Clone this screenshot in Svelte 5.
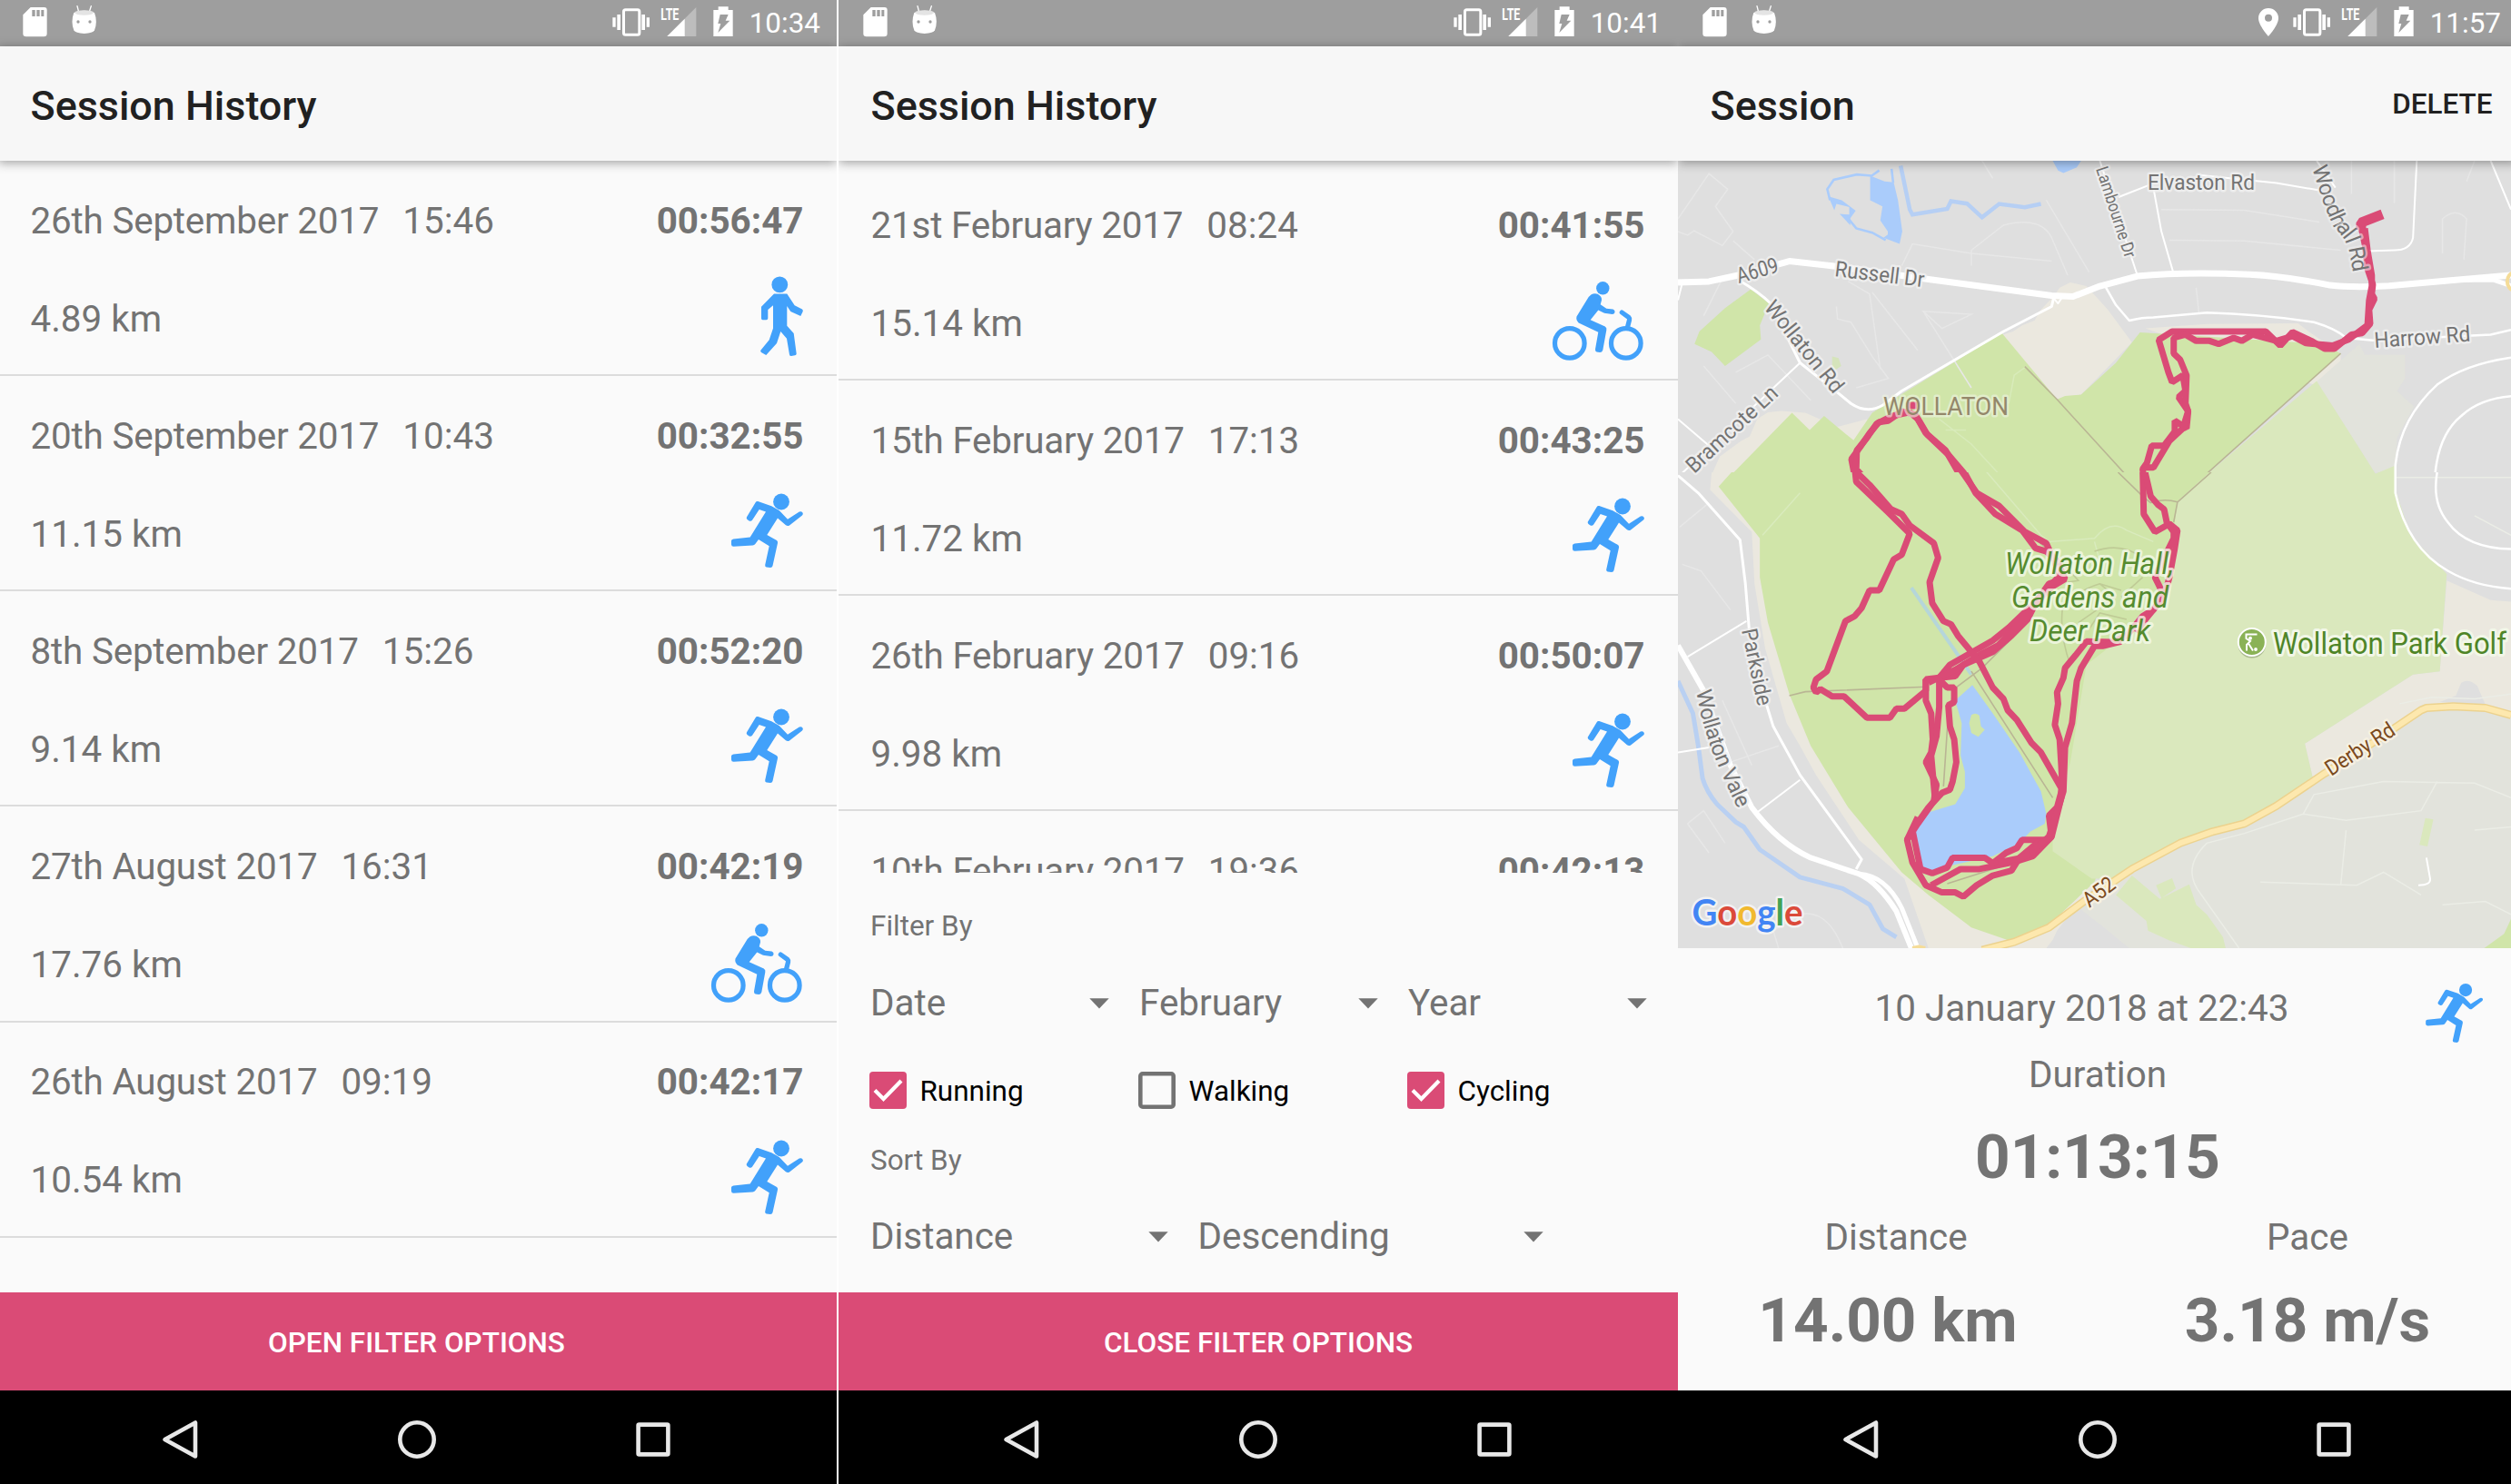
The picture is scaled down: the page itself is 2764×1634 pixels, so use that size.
<script>
  const septemberList = [
    { date: '26th September 2017', time: '15:46', duration: '00:56:47', distance: '4.89 km', kind: 'walk' },
    { date: '20th September 2017', time: '10:43', duration: '00:32:55', distance: '11.15 km', kind: 'run' },
    { date: '8th September 2017', time: '15:26', duration: '00:52:20', distance: '9.14 km', kind: 'run' },
    { date: '27th August 2017', time: '16:31', duration: '00:42:19', distance: '17.76 km', kind: 'cycle' },
    { date: '26th August 2017', time: '09:19', duration: '00:42:17', distance: '10.54 km', kind: 'run' }
  ];

  const februaryList = [
    { date: '21st February 2017', time: '08:24', duration: '00:41:55', distance: '15.14 km', kind: 'cycle' },
    { date: '15th February 2017', time: '17:13', duration: '00:43:25', distance: '11.72 km', kind: 'run' },
    { date: '26th February 2017', time: '09:16', duration: '00:50:07', distance: '9.98 km', kind: 'run' },
    { date: '10th February 2017', time: '19:36', duration: '00:42:13', distance: '9.60 km', kind: 'run' }
  ];

  const activities = [
    { label: 'Running', checked: true },
    { label: 'Walking', checked: false },
    { label: 'Cycling', checked: true }
  ];

  // Straight map labels: x, y of the baseline start, rotation and drawn length
  const streets = [
    { t: 'A609', x: 1914, y: 312, a: -16, l: 47 },
    { t: 'Russell Dr', x: 2019, y: 304, a: 7, l: 99 },
    { t: 'Elvaston Rd', x: 2364, y: 209, a: 0, l: 118 },
    { t: 'Wollaton Rd', x: 1941, y: 339, a: 51, l: 123 },
    { t: 'Bramcote Ln', x: 1865, y: 522, a: -43, l: 128 },
    { t: 'Harrow Rd', x: 2614, y: 383, a: -4, l: 106 },
    { t: 'Parkside', x: 1917, y: 694, a: 78, l: 86 },
    { t: 'Lambourne Dr', x: 2307, y: 186, a: 72, l: 104, c: 'small' },
    { t: 'Derby Rd', x: 2566, y: 855, a: -33, l: 86, c: 'trunk' },
    { t: 'A52', x: 2300, y: 1000, a: -37, l: 38, c: 'trunk' }
  ];
</script>

{#snippet activityIcon(kind)}
  <svg class="activity" viewBox="0 0 104 90">
    {#if kind === 'walk'}
      <ellipse cx="77.3" cy="10.4" rx="8.9" ry="8.9" />
      <path d="M71 20.6H85.3L93.7 33.2L102 37.4Q103.4 38.6 102.6 40.2L100.3 45L89.3 39.9L85.3 34V55.8L92.7 63.9L95.7 86.6Q95.6 88 94 88.3L90 89Q88.200 89 88 87.500L85 69.800L78.300 62L74 75L62.300 88L57 85Q55.500 83.800 56.500 82.500L65.700 71.300L70 58.400V33.200L64.300 38V47.500Q64.200 49.200 62.500 49.300H58.500Q57 49 57 47.500V34.700Z" />
    {:else if kind === 'run'}
      <circle cx="79" cy="12.5" r="8.9" />
      <path d="M53.300 12.100L68.300 17.200L76.700 22L86 31.700L98.800 23.600Q101 22.600 102.500 24.400Q103.500 26 102 27.600L88 38.400Q86 39.800 84 38.300L75 30.600L63.300 49.100L74 55Q75.400 56 75 58L69.500 83Q69 84.800 67 85L62.700 84.600Q60.900 84 61.200 82L65.700 61.300L54 53.900L50.300 59Q49.300 60.200 47.500 60.400L26.500 61.800Q24 61.700 24 59.500V55.500Q24.100 53.700 26.300 53.400L44.700 51.600L62 23.500L54.700 20.900L47 32.800Q45.600 34.400 43.600 33.400L41.500 32Q40.200 30.700 41 29.200L50.500 13.400Q51.500 11.700 53.300 12.100Z" />
    {:else}
      <circle cx="57.300" cy="9.300" r="7.200" />
      <circle class="ring" cx="20.800" cy="69.900" r="16.300" />
      <circle class="ring" cx="82.800" cy="69.900" r="16.300" />
      <path class="bar" d="M78.300 36L86 41.600Q87 42.600 86.600 44L84.300 53" />
      <path d="M44.300 16.500Q48 14.500 51.700 15.800Q56.500 18.500 56 22.400L54.700 27.200L61.300 31.800L68.500 32.600Q70.800 33.500 70.600 35.700Q70 37.900 67.700 38L59 36.800L52.300 33.500L43.700 44.300L59.800 51.500Q62 53 61.300 55.500L57.300 77.400Q56.500 79.900 54 80L50.600 79.500Q48.700 78.800 49 76.500L52.300 57.700L30.700 47.500Q27.500 44.500 28.500 40.600L41.700 18.900Z" />
    {/if}
  </svg>
{/snippet}

{#snippet statusBar(time, located)}
  <div class="status">
    <svg class="notices" viewBox="0 0 390 153">
      <path d="M73 49L98 24H143Q152 24 152 33V111Q152 121 142 121H83Q73 121 73 111Z" fill="#fff" />
      <path d="M103 33h10v21h-10zM118 33h10v21h-10zM133 33h9v21h-9z" fill="#9e9e9e" />
      <path d="M252 20L256 36M298 20L293 36" stroke="#fff" stroke-width="4" stroke-linecap="round" />
      <path d="M241 42Q275 28 309 42Q320 72 309 100Q304 110 275 111Q246 110 241 100Q230 72 241 42Z" fill="#fff" />
      <ellipse cx="275" cy="42" rx="31" ry="8" fill="#e4e4e4" />
      <circle cx="255" cy="72" r="5" fill="#9e9e9e" /><circle cx="294" cy="72" r="5" fill="#9e9e9e" />
    </svg>
    <div class="spacer"></div>
    {#if located}
      <svg class="pin" viewBox="0 0 22 31">
        <path fill-rule="evenodd" d="M11 0A11 11 0 0 0 0 11C0 19 11 31 11 31S22 19 22 11A11 11 0 0 0 11 0ZM11 6.800A4 4 0 1 1 11 14.800A4 4 0 0 1 11 6.800Z" fill="#fff" />
      </svg>
    {/if}
    <svg class="signals" viewBox="0 0 450 153">
      <path d="M43 58h10v31h-10zM58 48h11v51h-11zM139 48h11v51h-11zM155 58h10v31h-10z" fill="#fff" />
      <rect x="79.500" y="32" width="52" height="83" rx="6" fill="none" stroke="#fff" stroke-width="9" />
      <text x="202" y="67" font-size="56" textLength="60" lengthAdjust="spacingAndGlyphs">LTE</text>
      <path d="M319 24V120H223Z" fill="#bdbdbd" />
      <path d="M281 62V120H223Z" fill="#fff" />
      <path d="M376 33H392V22H425V33H440V120H376Z" fill="#fff" />
      <path d="M398 48H425L416 68H430L391 108L400 78H391Z" fill="#9e9e9e" />
    </svg>
    <span class="clock">{time}</span>
  </div>
{/snippet}

{#snippet appBar(title, action)}
  <header class="appbar">
    <h1>{title}</h1>
    {#if action}<button class="action">{action}</button>{/if}
  </header>
{/snippet}

{#snippet navBar()}
  <nav class="nav">
    <svg viewBox="0 0 44 44"><path d="M38 3.500V40.500L4.500 22Z" /></svg>
    <svg viewBox="0 0 44 44"><circle cx="22" cy="22" r="18.700" /></svg>
    <svg viewBox="0 0 44 44"><rect x="5.600" y="5.600" width="32.800" height="32.800" rx="1" /></svg>
  </nav>
{/snippet}

{#snippet sessionRow(s)}
  <li class="row">
    <div class="line">
      <span class="when">{s.date}</span><span class="at">{s.time}</span>
      <strong>{s.duration}</strong>
    </div>
    <div class="line second">
      <span>{s.distance}</span>
      {@render activityIcon(s.kind)}
    </div>
  </li>
{/snippet}

{#snippet dropdown(label)}
  <div class="dropdown">
    <span>{label}</span>
    <svg class="caret" viewBox="0 0 22 12"><path d="M0.300 0.300H21.700L11 11.500Z" /></svg>
  </div>
{/snippet}

<main class="stage">
  <section class="phone first">
    {@render statusBar('10:34', false)}
    {@render appBar('Session History')}
    <ul class="list">
      {#each septemberList as s}{@render sessionRow(s)}{/each}
    </ul>
    <button class="toggle">OPEN FILTER OPTIONS</button>
    {@render navBar()}
  </section>

  <section class="phone">
    {@render statusBar('10:41', false)}
    {@render appBar('Session History')}
    <ul class="list scrolled">
      {#each februaryList as s}{@render sessionRow(s)}{/each}
    </ul>
    <div class="filters">
      <p class="caption">Filter By</p>
      <div class="thirds">
        {@render dropdown('Date')}
        {@render dropdown('February')}
        {@render dropdown('Year')}
      </div>
      <div class="thirds checks">
        {#each activities as a}
          <div class="check">
            <svg viewBox="0 0 41 41">
              {#if a.checked}
                <rect width="41" height="41" rx="4" fill="#da4b76" />
                <path d="M6 20.500L15.500 30L35 10" fill="none" stroke="#fff" stroke-width="4.200" />
              {:else}
                <rect x="2.300" y="2.300" width="36.400" height="36.400" rx="2.500" fill="none" stroke="#737373" stroke-width="4.600" />
              {/if}
            </svg>
            <span>{a.label}</span>
          </div>
        {/each}
      </div>
      <p class="caption sort">Sort By</p>
      <div class="sorts">
        {@render dropdown('Distance')}
        {@render dropdown('Descending')}
      </div>
    </div>
    <button class="toggle">CLOSE FILTER OPTIONS</button>
    {@render navBar()}
  </section>

  <section class="phone third">
    {@render statusBar('11:57', true)}
    {@render appBar('Session', 'DELETE')}
    <div class="map">
      <!-- northern half -->
      <svg class="tile north" viewBox="12 514 1556 996" preserveAspectRatio="none">
        <g fill="#ebe8df">
          <path d="M715 945L725 920L745 903L775 915L815 990L860 1095L765 1262L720 1277L600 1080L638 1060L655 1040L678 1025L690 990Z" />
          <path d="M885 1050L1000 1036L1170 1034L1190 1060L1250 1130L1250 1165L1200 1230L1000 1120Z" />
          <path d="M70 1568L72 1530L90 1460L130 1410L146 1395L160 1340L180 1318L205 1314L250 1320L310 1365L365 1340L400 1500Z" />
        </g>
        <path fill="#e2e3dc" d="M1285 1100L1295 1135L1370 1135L1370 1210L1355 1250L1387 1300L1355 1400L1352 1490L1315 1515L1205 1220Z" />
        <path fill="#d0e5a9" d="M617 1065L720 1277L735 1266L765 1262L830 1160L875 1063L1220 1100L1250 1130L965 1568H85L88 1560L225 1320L258 1375L285 1330L340 1408L355 1370L375 1320L430 1260Z" />
        <path fill="#dae8bd" d="M1205 1218L1315 1515L1352 1488V1568H965Z" />
        <path fill="#d0e5a9" d="M148 925L182 970L165 1040L167 1085L100 1170L75 1125L43 1100L52 1060L100 985Z" />
        <path fill="#d5e4bb" d="M300 1140L312 1145L317 1170L300 1190Z" />
        <g class="faint">
          <path d="M12 740L30 752L42 738L95 785L115 740L82 660L105 605L70 555L12 700M115 770L155 830M330 900L370 940L390 1180M430 850L450 780L560 810L710 835M560 850V800L620 720Q690 690 710 760L740 880M308 980L310 1020L335 1030L375 1140L405 1210L345 1240M470 995L560 1005L505 1050ZM470 995L560 1240M375 935L460 1120M60 1170L120 1290M120 1190L180 1135L260 1280M700 640L780 870M915 670L1070 672L1210 710M930 768L1070 770L1250 800M1440 810V700Q1465 660 1485 700L1480 830M1350 514L1350 650M980 920L985 1000M1270 514V620M1500 514L1485 580M60 1010L95 890M580 514L600 570" />
          <path d="M500 1340L560 1420L640 1568M512 1375L550 1375M630 1290L640 1200L660 1175" stroke="#d8ebba" />
        </g>
        <g fill="none" stroke="#aaccfb" stroke-width="2.600">
          <path d="M388 545L374 562L346 558L303 575L291 605L296 640M326 690L345 730L375 744L400 768M411 540L414 584" />
          <path d="M428 530L445 670L450 686L515 668L522 643L552 651L580 695L612 652L660 663L690 652" stroke="#b6cff4" stroke-width="4.500" />
        </g>
        <path fill="#aaccfb" d="M293 628L318 640L344 674L334 698L334 720L314 684L332 686L332 662L308 652L304 672ZM371 562L398 580L415 583L423 640L431 740L426 780L396 760L404 750L404 740L390 705L394 660L371 640ZM712 514H765L757 535L732 553L722 545Z" />
        <g fill="none" stroke="#fff" stroke-linejoin="round">
          <path stroke-width="7" d="M12 903L70 900L125 880L220 835L300 850L480 893L710 945L750 948L800 915L870 883Q960 868 1080 878Q1140 882 1230 912Q1270 920 1340 914L1450 897L1568 880" />
          <path stroke-width="5" d="M1460 895L1535 895L1568 914M12 901H38" />
          <path stroke-width="3" d="M125 895Q165 935 185 970L240 1160L310 1255L335 1290Q365 1325 395 1295L430 1250L530 1150L620 1060L710 980L715 945" />
          <path stroke-width="2" d="M12 1525L110 1370L240 1160M12 1340L70 1425M12 1515L50 1568M12 960L20 905M712 950L722 970L730 950M800 514L870 880M835 630L895 590M985 560L1130 585L1215 610M900 600L915 740L937 870M1392 514L1385 760Q1380 800 1350 800L1300 803M1530 514L1568 670M1205 514L1240 600" />
          <path stroke-width="2.500" d="M810 915L830 975L855 1025Q880 1015 900 1015L1000 1000Q1100 1005 1200 1030Q1240 1050 1260 1080L1310 1088L1530 1070L1568 1055" />
          <path stroke-width="2.500" d="M1568 1143Q1480 1165 1430 1230Q1360 1340 1352 1490V1568M1568 1267Q1510 1275 1475 1330Q1425 1400 1425 1568" />
        </g>
        <ellipse cx="1574" cy="900" rx="13" ry="28" fill="none" stroke="#f5dc98" stroke-width="4" />
        <g class="trail"><path d="M660 1172L720 1277L875 1568M1250 1130L965 1568" /></g>
        <g class="route">
          <path class="bold" d="M1328 685L1288 712V735" />
          <path class="bold" d="M449 1285V1308" />
          <path d="M1288 725L1296 790L1300 860L1310 910L1308 940L1313 955L1303 990L1305 1035L1290 1065L1270 1070L1238 1115H1220L1195 1090L1160 1062L1137 1105L1110 1060H935L910 1087L928 1190L935 1222L955 1200L960 1250L947 1270L965 1315L962 1370L940 1345V1380L920 1425H897L888 1480L880 1500L885 1568" />
          <path d="M1295 730L1300 800L1308 880V915L1303 960L1300 1040L1265 1085L1235 1105L1185 1097L1160 1075L1130 1090L1085 1070L1065 1090L1050 1080L1022 1100L1005 1090H980L960 1070L938 1080V1130L950 1150L962 1200L960 1290L965 1315L955 1370L930 1410L900 1495L880 1495" />
          <path d="M375 1568L343 1530L336 1468L352 1430L370 1385L387 1350L405 1345L430 1315L455 1325L464 1350L478 1390L515 1450L545 1510L570 1575" />
          <path d="M385 1575L345 1500L346 1440L365 1400L383 1355L412 1330L445 1318L460 1340L475 1385L512 1440L555 1568" />
        </g>
      </svg>
      <!-- southern half -->
      <svg class="tile south" viewBox="12 56 1556 1468" preserveAspectRatio="none">
        <path fill="#ebe8df" d="M75 56L72 110L150 240L155 400L175 600L215 830L240 900L270 990L350 1190L435 1310L480 1524H700L740 1440L790 1330L700 600L200 56ZM1448 390L1530 450L1568 455V820H1400L1198 1000L1183 893L1385 680L1435 670Z" />
        <path fill="#e2e3dc" d="M1568 810L1520 785L1400 785L1220 985L1070 1140L950 1200L755 1390L850 1524H1568Z" />
        <path fill="#dfdfdf" d="M755 1395L800 1450L855 1524H705L720 1470ZM1475 705Q1490 690 1505 715L1520 772L1435 765L1465 745Z" />
        <path fill="#d0e5a9" d="M112 56L88 100L165 260L165 380L180 520L220 740L260 900L330 1090L430 1290L480 1360L560 1460L630 1500L700 1460L790 1320L900 800L1005 56Z" />
        <path fill="#dae8bd" d="M1005 56L945 145L925 400L830 580L775 650L745 950L712 1150V1225L785 1310H830L950 1200L1070 1140L1198 1000L1183 893L1385 680L1435 670L1448 370L1380 250L1352 110V30L1315 58L1312 54Z" />
        <path fill="#dfdfdf" d="M1300 30L1315 60L1352 35Z" />
        <path fill="#dae8bd" d="M860 1300L912 1372L887 1440L830 1360ZM905 1330L935 1308L942 1340L915 1370ZM912 1372L967 1327L980 1390L1000 1420L1030 1490L1035 1524H970L930 1500L890 1470L887 1440ZM1408 1123L1423 1127L1412 1210L1397 1205Z" />
        <path fill="#d0e5a9" d="M1568 1434V1524H1518L1555 1480Z" />
        <path fill="#aaccfb" d="M562 712L600 800L650 920L690 1040L700 1110L697 1140L670 1165L650 1200L600 1240L520 1270L475 1290L460 1240L455 1160L480 1105L530 1080L548 1030V980L540 930L542 830L530 760Z" />
        <path fill="#d0e5a9" d="M560 805Q567 795 575 806L578 840L585 850L573 872L560 860L556 830Z" />
        <g class="faint">
          <path d="M20 340L55 360L110 480M15 225L70 150M95 760L150 960M110 950L200 900M30 1140L60 1100L100 1200M30 1140L70 1230M200 1524L190 1470L240 1420Q290 1400 320 1524" />
          <path d="M1180 1110L1200 1050L1330 1010L1500 1015L1568 1060M1180 1110L1070 1170L1000 1200Q950 1280 990 1360L1060 1524M1180 1110L1260 1130L1400 1100L1430 1010M1352 72H1568M1100 1320L1280 1330L1330 1290L1400 1360M1500 1160L1568 1150M1440 1390L1520 1380L1568 1420M1260 1160L1250 1330M1500 190L1568 250M1360 770L1420 750L1500 755L1568 740" stroke="#ebede6" />
          <path d="M240 120L170 250M560 0L690 250L705 270L790 260Q820 200 850 235L900 270M790 270L800 330" stroke="#d9ebbd" />
        </g>
        <g fill="none" stroke-linejoin="round">
          <path stroke="#b5d6da" stroke-width="4" d="M448 412L560 680" />
          <path stroke="#b9d0f2" stroke-width="5" d="M12 700L40 800L50 900L58 1000Q65 1040 85 1080L120 1135L135 1150L165 1220L240 1305L320 1340L370 1390L395 1465L420 1490" />
          <path stroke="#ecd28e" stroke-width="9" d="M580 1530L640 1505L705 1460L770 1380L860 1280L950 1200L1010 1165L1070 1140L1130 1085L1220 985L1310 890L1400 790L1410 783L1460 778L1520 783L1568 805" />
          <path stroke="#fde8ae" stroke-width="6" d="M580 1530L640 1505L705 1460L770 1380L860 1280L950 1200L1010 1165L1070 1140L1130 1085L1220 985L1310 890L1400 790L1410 783L1460 778L1520 783L1568 805" />
          <g stroke="#fff">
            <path stroke-width="6" d="M12 590L60 730L110 960L150 1090Q200 1200 260 1245L350 1295Q385 1320 420 1410L448 1524" />
            <path stroke-width="5" d="M350 1295Q400 1300 430 1400L460 1524" />
            <path stroke-width="3" d="M12 66L50 120L128 265L138 400L145 540L175 760L190 840L240 990L355 1250L345 1280" />
            <path stroke-width="2" d="M30 625L140 515M12 920L70 905M160 1105L240 1005M1410 1245L1417 1310Q1418 1330 1395 1330" />
            <path stroke-width="2.500" d="M1352 56V120Q1375 290 1450 360Q1500 408 1568 415M1430 56Q1420 150 1450 210Q1485 290 1568 293" />
          </g>
          <path stroke="#f5dc98" stroke-width="4" d="M450 1524L462 1520L474 1524" />
        </g>
        <g class="trail">
          <path d="M834 56L880 130L895 150Q920 135 945 148M1008 56L945 148L938 210M220 745L250 733L475 718M530 722L580 660L665 520M560 670L712 1060M525 740L515 850L508 1025M515 1325L620 1270L690 1200M570 110L700 290" />
          <path d="M705 290L760 390L740 395M730 480Q725 560 745 650M740 460Q760 420 800 400L840 420M790 300Q840 270 880 320M800 400L830 440L760 520M840 440L880 380M780 540L800 490L850 510" stroke="#bfcb96" />
        </g>
        <g class="route">
          <path d="M515 -20L545 50L568 120L605 185L655 235L680 290L700 300L720 330L735 385L710 410L680 460L665 510L635 560L600 610L545 650L530 685L500 690L475 695V760L485 800L488 880L485 920L475 950L485 985L495 1020L490 1070L460 1140L440 1190" />
          <path d="M520 0L570 120L612 160L660 240L700 275L715 330L725 375L700 420L665 480L630 535L600 575L520 650L500 690L500 780L495 870L485 930L492 1060" />
          <path d="M730 385L705 400L675 470L645 530L610 590L580 615L530 665L480 705" />
          <path d="M338 -20L345 85L405 180L445 245L430 310L415 325L388 420H370L355 475L342 500L325 515L290 670L270 695L265 720L270 735L278 725L300 747H322L365 813H408L420 785H435L475 730V695" />
          <path d="M342 -20V50L370 95L410 170L430 185L445 220L490 275L498 320L482 395L487 460L508 515L522 525L535 560L560 610L575 640L600 720L620 755L628 790L645 820L672 890L690 920L728 1030V1060L710 1180L675 1240L640 1258L575 1280H540L485 1330" />
          <path d="M500 695L515 720H528V765L517 775L520 840L528 880L532 950L525 1010L520 1035L505 1045L480 1090L450 1160L455 1200L465 1280L487 1293L515 1275L525 1245H585L600 1262L625 1230L645 1215L655 1190H700" />
          <path d="M460 1120L440 1190L450 1260L475 1330L505 1352H530L545 1365L570 1330L600 1300L635 1285L650 1245L690 1190" />
          <path d="M822 580L775 578L755 620L735 660L732 690L720 735L722 770L716 835L725 880L728 960L730 1030L720 1090L705 1115L710 1180L680 1225L655 1245L610 1260" />
          <path d="M840 578L805 592H790L765 660L757 700L748 830L735 905L732 1040L715 1130L705 1180L670 1230" />
          <path d="M915 -10L898 40L888 10L880 40L882 185L903 240L930 215L945 235L940 290L930 380L920 440L900 480L880 500L850 560L822 582" />
          <path d="M885 -10V60L895 130L908 155L920 170L925 210L938 240V260L920 320L903 380L918 430L905 470L885 510L868 550" />
        </g>
      </svg>
      <!-- labels drawn above both halves -->
      <svg class="labels" viewBox="1847 177 924 867">
        <defs>
          <path id="woodhall" d="M2545 185L2559 228L2567 246L2581 264L2586 277L2594 320" />
          <path id="vale" d="M1867 761L1873 790L1883 823L1894 850L1921 908" />
        </defs>
        {#each streets as s}
          <text class={s.c} transform={`translate(${s.x} ${s.y}) rotate(${s.a})`} textLength={s.l} lengthAdjust="spacingAndGlyphs">{s.t}</text>
        {/each}
        <text class="see"><textPath href="#woodhall" textLength="125">Woodhall Rd</textPath></text>
        <text><textPath href="#vale" textLength="138">Wollaton Vale</textPath></text>
        <text class="area" x="2073" y="457" textLength="138" lengthAdjust="spacingAndGlyphs">WOLLATON</text>
        <g class="park">
          <text x="2207" y="631.500" textLength="186" lengthAdjust="spacingAndGlyphs">Wollaton Hall,</text>
          <text x="2214" y="668.700" textLength="173" lengthAdjust="spacingAndGlyphs">Gardens and</text>
          <text x="2234" y="706" textLength="133" lengthAdjust="spacingAndGlyphs">Deer Park</text>
        </g>
        <circle cx="2478.800" cy="709" r="15.500" fill="#a9b98f" />
        <circle cx="2478.800" cy="707" r="15" fill="#8ab256" stroke="#fff" stroke-width="2" />
        <path d="M2484.500 698.500H2472.500V703L2477 706L2473 710V716.500M2475 708.500L2480 716.500" fill="none" stroke="#fff" stroke-width="2" />
        <circle cx="2477" cy="702.800" r="2" fill="#fff" /><circle cx="2483" cy="715" r="1.900" fill="#fff" />
        <text class="golf" x="2502" y="719.600" textLength="257" lengthAdjust="spacingAndGlyphs">Wollaton Park Golf</text>
        <text class="brand" x="1862.500" y="1018.500" textLength="122" lengthAdjust="spacingAndGlyphs"><tspan fill="#4285f4">G</tspan><tspan fill="#db4a3a">o</tspan><tspan fill="#f1b92f">o</tspan><tspan fill="#4285f4">g</tspan><tspan fill="#45a355">l</tspan><tspan fill="#db4a3a">e</tspan></text>
      </svg>
    </div>
    <div class="summary">
      <div class="headline">
        <span>10 January 2018 at 22:43</span>
        <div class="badge">{@render activityIcon('run')}</div>
      </div>
      <p class="name duration">Duration</p>
      <p class="value">01:13:15</p>
      <div class="halves">
        <div><p class="name indented">Distance</p><p class="value">14.00 km</p></div>
        <div><p class="name">Pace</p><p class="value">3.18 m/s</p></div>
      </div>
    </div>
    {@render navBar()}
  </section>
</main>

<style>
  :global(body) { background: #fff; overflow: hidden; }
  .stage { display: flex; width: 2764px; height: 1634px; overflow: hidden; font-family: Roboto, sans-serif; color: #737373; font-size: 40.400px; }
  .phone { flex: none; width: 924px; height: 1634px; display: flex; flex-direction: column; background: #fafafa; overflow: hidden; }
  .first { width: 923px; margin-left: -2px; margin-right: 2px; }
  .first .nav, .first .toggle { padding-right: 2px; }
  h1, p, ul, li { margin: 0; padding: 0; list-style: none; }
  button { border: 0; background: none; padding: 0; margin: 0; font-family: inherit; }

  .status { flex: none; height: 51px; background: #9e9e9e; display: flex; color: #fff; padding: 0 18px 0 2.500px; }
  .status svg { flex: none; height: 51px; display: block; }
  .notices { width: 130px; }
  .signals { width: 150px; }
  .signals text { fill: #fff; font-weight: 700; }
  .status .pin { width: 22px; height: 31px; margin: 9px 2px 0 0; }
  .spacer { flex: 1; }
  .clock { width: 93px; text-align: right; font-size: 31.450px; line-height: 52px; }

  .appbar { flex: none; height: 126px; background: #f7f7f7; display: flex; justify-content: space-between; padding: 0 27.500px 0 35.500px; position: relative; z-index: 2; box-shadow: 0 2px 11px rgba(0, 0, 0, 0.38); }
  h1 { font-weight: 500; font-size: 44.900px; line-height: 131px; color: #212121; }
  .action { font-weight: 500; font-size: 31.450px; line-height: 126px; color: #212121; padding: 1px 0 0; }

  .list { flex: 1; overflow: hidden; }
  .scrolled { flex: none; height: 779px; padding-top: 5px; }
  .row { height: 237.150px; box-sizing: border-box; border-bottom: 2.250px solid #dcdcdc; padding: 42.500px 36.500px 0 35.500px; }
  .line { display: flex; height: 48px; line-height: 48px; white-space: nowrap; }
  .when { letter-spacing: -0.200px; }
  .at { margin-left: 26px; }
  .line strong { margin-left: auto; font-weight: 700; }
  .second { margin-top: 60.400px; justify-content: space-between; }
  .activity { flex: none; display: block; width: 104px; height: 90px; fill: #42a1fa; }
  .second .activity { margin-top: -24.700px; }
  .ring, .bar { fill: none; stroke: #42a1fa; stroke-width: 5.200; stroke-linecap: round; }

  .filters { flex: 1; padding: 36px 0 0 35px; margin-top: 4px; }
  .caption { font-size: 31.450px; line-height: 38px; }
  .thirds { display: grid; grid-template-columns: repeat(3, 296px); margin-top: 41.500px; height: 48px; }
  .dropdown { display: flex; justify-content: space-between; line-height: 48px; padding-right: 33px; }
  .caret { flex: none; width: 22px; height: 12px; fill: #737373; margin-top: 18px; }
  .checks { margin: 51.500px 0 0 -1px; height: 41px; }
  .check { display: flex; font-size: 31.450px; line-height: 43px; color: #000; gap: 14.500px; }
  .check svg { flex: none; width: 41px; height: 41px; }
  .sort { margin-top: 37.500px; }
  .sorts { display: grid; grid-template-columns: 360.500px 413px; margin-top: 41.500px; }

  .toggle { flex: none; height: 108px; background: #da4b76; color: #fff; font-size: 31.500px; font-weight: 500; line-height: 108px; text-align: center; padding-top: 2px; box-sizing: border-box; }
  .nav { flex: none; height: 103px; background: #000; display: flex; justify-content: center; align-items: center; gap: 216px; padding-top: 4px; box-sizing: border-box; }
  .nav svg { width: 44px; height: 44px; fill: none; stroke: #e8e8e8; stroke-width: 4.600; stroke-linejoin: round; }

  .map { flex: none; height: 867px; width: 924px; position: relative; background: #dfdfdf; overflow: hidden; }
  .tile { display: block; width: 917px; background: #dfdfdf; overflow: hidden; }
  .north { height: 343px; }
  .south { height: 524px; }
  .tile :is(path, ellipse) { vector-effect: non-scaling-stroke; }
  .faint { fill: none; stroke: #e7e7e7; stroke-width: 1.500; }
  .trail { fill: none; stroke: #b9b594; stroke-width: 1.600; }
  .route { fill: none; stroke: #da4b76; stroke-width: 7; stroke-linejoin: bevel; }
  .bold { stroke-width: 11; }
  .labels { position: absolute; left: 0; top: 0; width: 924px; height: 867px; }
  .labels text { font-size: 24px; fill: #737373; stroke: rgba(240, 240, 240, 0.85); stroke-width: 5; stroke-linejoin: round; paint-order: stroke; }
  .labels .small { font-size: 19px; }
  .labels .see { stroke: rgba(240, 240, 240, 0.55); }
  .labels .trunk { fill: #7b4a1d; stroke: #f6f1e2; }
  .labels .area { font-size: 28px; fill: #94876a; stroke: rgba(238, 243, 225, 0.6); }
  .labels .park text { font-size: 32.500px; font-style: italic; fill: #558b2f; stroke: rgba(245, 250, 235, 0.75); stroke-width: 6; }
  .labels .golf { font-size: 32.500px; fill: #4f8527; stroke: #f2f7e8; stroke-width: 6; }
  .labels .brand { font-family: Lato, sans-serif; font-size: 41px; font-weight: 700; stroke: #f2f2f2; stroke-width: 5; }

  .summary { flex: 1; }
  .headline { display: flex; justify-content: flex-end; height: 48px; line-height: 48px; margin-top: 42.500px; padding-right: 37px; }
  .headline span { flex: 1; text-align: center; padding-left: 2px; }
  .badge { width: 0; }
  .headline .activity { width: 83px; height: 72px; margin: -6.500px 0 0 -83px; }
  .name { text-align: center; line-height: 48px; }
  .duration { margin-top: 25px; }
  .indented { padding-left: 18px; }
  .value { text-align: center; font-size: 67.400px; font-weight: 700; line-height: 80px; margin-top: 26.500px; }
  .halves { display: grid; grid-template-columns: 1fr 1fr; margin-top: 25px; }
</style>
